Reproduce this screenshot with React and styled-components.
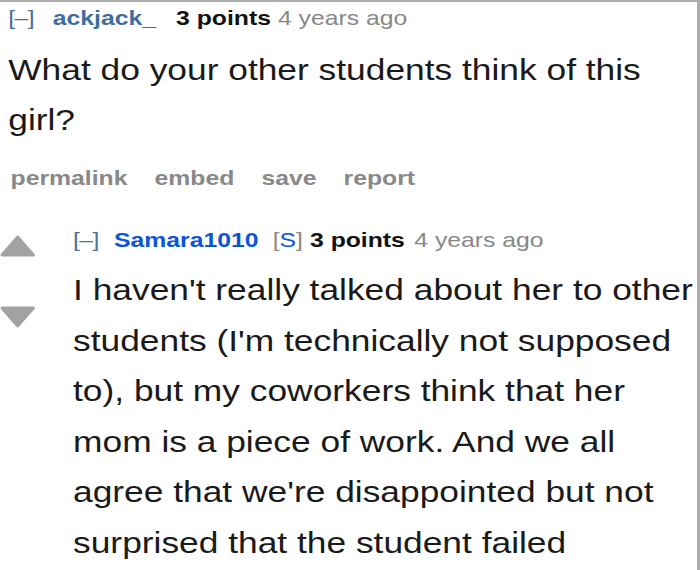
import React from "react";
import styled, { createGlobalStyle } from "styled-components";

const Global = createGlobalStyle`
  html, body { margin: 0; padding: 0; background: #fff; }
  body { font-family: "Liberation Sans", Arial, Helvetica, sans-serif; }
`;

/* The captured page is rendered slightly wide; STRETCH reproduces that. */
const STRETCH = 1.178;

const Frame = styled.div`
  width: 700px;
  height: 570px;
  box-sizing: border-box;
  border-top: 2px solid #adadad;
  border-right: 3px solid #adadad;
  overflow: hidden;
`;

const Stretch = styled.div`
  width: ${697 / STRETCH}px;
  transform: scaleX(${STRETCH});
  transform-origin: left top;
`;

const Comment = styled.div`
  display: flex;
  padding-left: ${(p) => p.$indent || 0}px;
`;

const MidCol = styled.div`
  width: 62px;
  flex: none;
  display: flex;
  flex-direction: column;
  align-items: flex-start;
  padding-top: 10px;
  gap: 49px;
`;

const Entry = styled.div`
  flex: 1;
  min-width: 0;
`;

const Tagline = styled.div`
  font-size: 21px;
  line-height: 30px;
  padding-top: ${(p) => p.$top || 0}px;
  color: #888;
  white-space: nowrap;
`;

const Expand = styled.span`
  color: #4a6f9c;
  letter-spacing: -0.5px;
  margin-right: ${(p) => p.$gap || 10}px;
`;

const Author = styled.span`
  font-weight: bold;
  color: ${(p) => (p.$submitter ? "#0a55d8" : "#3f6e9e")};
  margin-right: ${(p) => p.$gap || 8}px;
`;

const Flair = styled.span`
  color: #8a8a8a;
  margin-right: 6px;
  & > b {
    font-weight: normal;
    color: #0a55d8;
  }
`;

const Score = styled.span`
  font-weight: bold;
  color: #111;
  margin-right: ${(p) => p.$gap || 6}px;
`;

const Body = styled.div`
  font-size: 30px;
  line-height: ${(p) => p.$lh || 50}px;
  color: #1a1a1a;
  padding-top: ${(p) => p.$top || 0}px;
`;

const Buttons = styled.div`
  display: flex;
  gap: 23px;
  font-size: 21px;
  line-height: 30px;
  font-weight: bold;
  color: #888;
  padding: 18px 0 32px 2px;
`;

const Arrow = ({ down }) => (
  <svg width="30" height="22" viewBox="0 0 36 22" preserveAspectRatio="none">
    <path
      d={down ? "M2 2 L34 2 L18 20 Z" : "M2 20 L34 20 L18 2 Z"}
      fill="#a2a2a2"
      stroke="#a2a2a2"
      strokeWidth="3"
      strokeLinejoin="round"
    />
  </svg>
);

export default function App() {
  return (
    <Frame>
      <Global />
      <Stretch>
        <Comment $indent={7}>
          <Entry>
            <Tagline $top={1}>
              <Expand $gap={16}>[–]</Expand>
              <Author $gap={17}>ackjack_</Author>
              <Score>3 points</Score>4 years ago
            </Tagline>
            <Body $top={12}>
              What do your other students think of this girl?
            </Body>
            <Buttons>
              <span>permalink</span>
              <span>embed</span>
              <span>save</span>
              <span>report</span>
            </Buttons>
          </Entry>
        </Comment>
        <Comment>
          <MidCol>
            <Arrow />
            <Arrow down />
          </MidCol>
          <Entry>
            <Tagline>
              <Expand $gap={13}>[–]</Expand>
              <Author $submitter $gap={12}>Samara1010</Author>
              <Flair>
                [<b>S</b>]
              </Flair>
              <Score $gap={8}>3 points</Score>4 years ago
            </Tagline>
            <Body $top={10} $lh={50.6}>
              I haven't really talked about her to other students (I'm
              technically not supposed to), but my coworkers think that her
              mom is a piece of work. And we all agree that we're disappointed
              but not surprised that the student failed
            </Body>
          </Entry>
        </Comment>
      </Stretch>
    </Frame>
  );
}
